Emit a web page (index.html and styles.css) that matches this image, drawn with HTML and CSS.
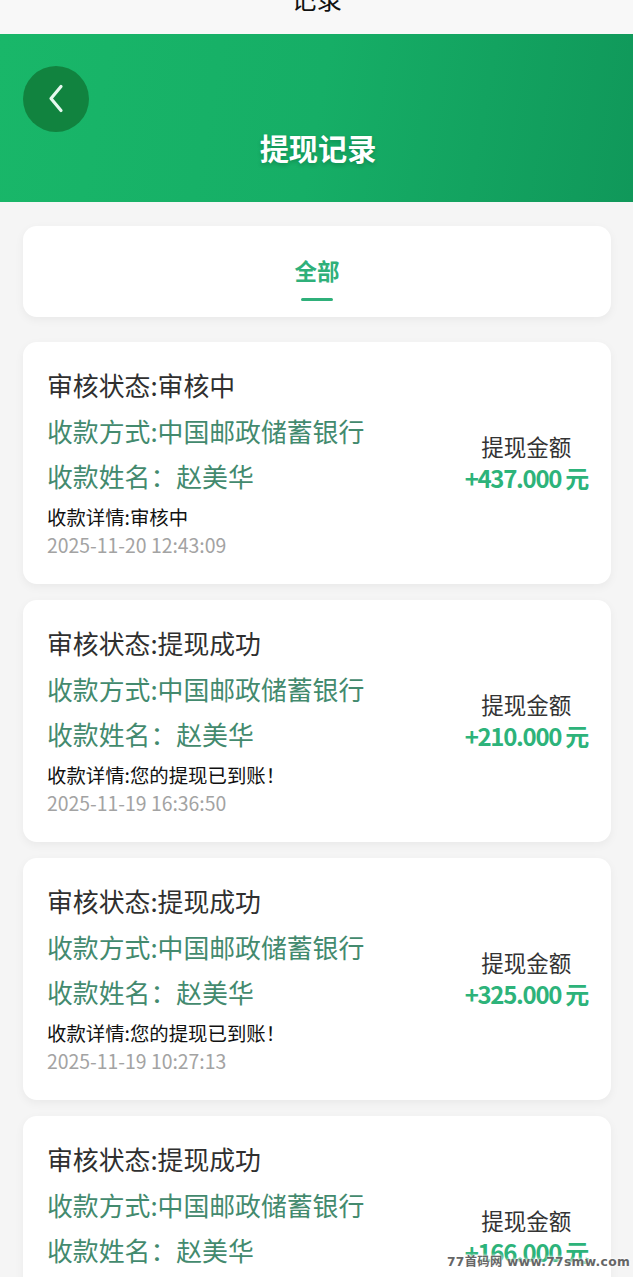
FILE: index.html
```html
<!DOCTYPE html>
<html lang="zh-CN">
<head>
<meta charset="utf-8">
<title>提现记录</title>
<link rel="stylesheet" href="styles.css">
</head>
<body>
<div class="page">
  <div class="topbar"><span class="topbar-title">记录</span></div>
  <header class="hero">
    <button class="back" aria-label="返回">
      <svg class="back-icon" viewBox="0 0 16 32" width="16" height="32"><path d="M13 3.500 L3 15.500 L13 27.500" /></svg>
    </button>
    <h1 class="hero-title">提现记录</h1>
  </header>
  <main class="content">
    <nav class="tabs"><div class="tab"><span class="tab-label">全部</span><span class="tab-line"></span></div></nav>

    <article class="card">
      <div class="info">
        <p class="status">审核状态:审核中</p>
        <p class="line-green">收款方式:中国邮政储蓄银行</p>
        <p class="line-green">收款姓名：赵美华</p>
        <p class="detail">收款详情:审核中</p>
        <p class="date">2025-11-20 12:43:09</p>
      </div>
      <div class="money"><span class="money-label">提现金额</span><span class="money-value">+437.000 元</span></div>
    </article>

    <article class="card">
      <div class="info">
        <p class="status">审核状态:提现成功</p>
        <p class="line-green">收款方式:中国邮政储蓄银行</p>
        <p class="line-green">收款姓名：赵美华</p>
        <p class="detail">收款详情:您的提现已到账！</p>
        <p class="date">2025-11-19 16:36:50</p>
      </div>
      <div class="money"><span class="money-label">提现金额</span><span class="money-value">+210.000 元</span></div>
    </article>

    <article class="card">
      <div class="info">
        <p class="status">审核状态:提现成功</p>
        <p class="line-green">收款方式:中国邮政储蓄银行</p>
        <p class="line-green">收款姓名：赵美华</p>
        <p class="detail">收款详情:您的提现已到账！</p>
        <p class="date">2025-11-19 10:27:13</p>
      </div>
      <div class="money"><span class="money-label">提现金额</span><span class="money-value">+325.000 元</span></div>
    </article>

    <article class="card">
      <div class="info">
        <p class="status">审核状态:提现成功</p>
        <p class="line-green">收款方式:中国邮政储蓄银行</p>
        <p class="line-green">收款姓名：赵美华</p>
        <p class="detail">收款详情:您的提现已到账！</p>
        <p class="date">2025-11-19 09:12:41</p>
      </div>
      <div class="money"><span class="money-label">提现金额</span><span class="money-value">+166.000 元</span></div>
    </article>
  </main>
  <div class="watermark">77首码网 www.77smw.com</div>
</div>
</body>
</html>
```

FILE: styles.css
```css
* { box-sizing: border-box; }
html, body { margin: 0; padding: 0; }
body {
  font-family: "Noto Sans CJK SC", "Noto Sans", sans-serif;
  background: #f5f5f5;
}
.page {
  position: relative;
  width: 100%;
  height: 1277px;
  overflow: hidden;
  background: #f5f5f5;
}
.topbar {
  height: 34px;
  background: #f8f8f8;
  display: flex;
  justify-content: center;
  overflow: hidden;
}
.topbar-title {
  font-size: 25.500px;
  line-height: 30px;
  margin-top: -17px;
  color: #111;
}
.hero {
  height: 168px;
  padding: 32px 23px 0;
  background: linear-gradient(100deg, #19b769 0%, #16ae66 50%, #10985a 100%);
}
.back {
  display: flex;
  align-items: center;
  justify-content: center;
  width: 66px;
  height: 66px;
  padding: 0;
  border: 0;
  border-radius: 50%;
  background: #11833f;
}
.back-icon path {
  fill: none;
  stroke: #e6f8ee;
  stroke-width: 3.200;
  stroke-linecap: round;
  stroke-linejoin: round;
}
.hero-title {
  margin: 0;
  padding-left: 3px;
  text-align: center;
  color: #fff;
  font-size: 29.200px;
  line-height: 30px;
  font-weight: 700;
  text-shadow: 0 2px 4px rgba(0, 0, 0, 0.2);
}
.content {
  padding: 24px 22px 0 23px;
  display: flex;
  flex-direction: column;
  gap: 16.500px;
}
.tabs {
  height: 91px;
  margin-bottom: 8.500px;
  background: #fff;
  border-radius: 14px;
  box-shadow: 0 3px 10px rgba(0, 0, 0, 0.05);
  display: flex;
  justify-content: center;
  padding-top: 27px;
}
.tab {
  display: flex;
  flex-direction: column;
  align-items: center;
}
.tab-label {
  font-size: 22.500px;
  line-height: 34px;
  font-weight: 700;
  color: #2fb07a;
}
.tab-line {
  width: 32px;
  height: 3px;
  margin-top: 11px;
  background: #2fb07a;
  border-radius: 2px;
}
.card {
  flex: none;
  height: 241.500px;
  background: #fff;
  border-radius: 14px;
  box-shadow: 0 3px 10px rgba(0, 0, 0, 0.05);
  padding: 23px 23px 0 24px;
  display: flex;
  justify-content: space-between;
  align-items: center;
}
.info {
  align-self: flex-start;
  display: flex;
  flex-direction: column;
}
.info p { margin: 0; white-space: nowrap; }
.status {
  font-size: 25.850px;
  line-height: 40px;
  color: #2f2f2f;
}
.info .line-green {
  font-size: 25.850px;
  line-height: 40px;
  margin-top: 5.500px;
  color: #438a6e;
}
.info .detail {
  font-size: 19.400px;
  line-height: 30px;
  margin-top: 6px;
  color: #111;
}
.info .date {
  font-size: 19.400px;
  line-height: 28px;
  margin-top: -1px;
  color: #a3a3a3;
}
.money {
  display: flex;
  flex-direction: column;
  align-items: center;
  margin-bottom: 25px;
}
.money-label {
  font-size: 22.500px;
  line-height: 32px;
  color: #333;
}
.money-value {
  font-size: 24px;
  line-height: 32px;
  font-weight: 700;
  letter-spacing: -1.300px;
  color: #2db37a;
  white-space: nowrap;
}
.watermark {
  position: absolute;
  right: 3px;
  bottom: 8px;
  font-family: "DejaVu Sans", "Noto Sans CJK SC", sans-serif;
  font-size: 12.300px;
  line-height: 14px;
  font-weight: 700;
  letter-spacing: 0.300px;
  color: #666;
  text-shadow: 0 0 3px #fff, 0 0 3px #fff;
  white-space: nowrap;
}
```
